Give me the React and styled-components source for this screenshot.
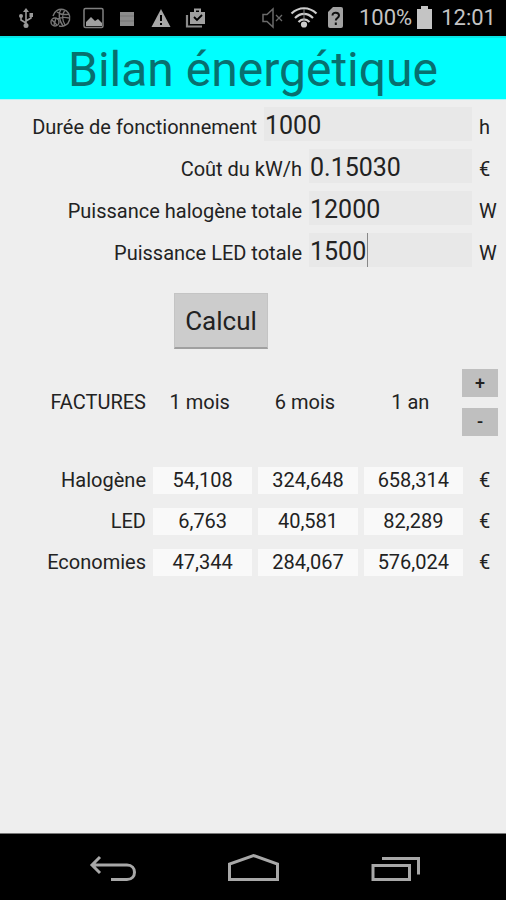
import React, { Component } from "react";
import styled, { createGlobalStyle } from "styled-components";

const GlobalStyle = createGlobalStyle`
  * { box-sizing: border-box; }
  body {
    margin: 0;
    background: #eeeeee;
    color: #222222;
    font-family: Roboto, "Liberation Sans", sans-serif;
  }
`;

const Screen = styled.div`
  display: flex;
  flex-direction: column;
  min-height: 100vh;
`;

const StatusBar = styled.div`
  display: flex;
  align-items: center;
  justify-content: space-between;
  height: 36px;
  padding: 0 10px 0 14px;
  background: #000000;
  color: #c4c4c4;
  font-size: 22px;
  line-height: 36px;
`;

const IconGroup = styled.div`
  display: flex;
  align-items: center;
  gap: ${props => props.gap}px;
`;

const Icon = styled.svg`
  display: block;
  flex: none;
  fill: none;
`;

const Header = styled.header`
  height: 64px;
  background: #00ffff;
  border-top: 2px solid #08e4e6;
  border-bottom: 1px solid #a8f8f8;
`;

const Title = styled.h1`
  margin: 0;
  color: #08706f;
  font-size: 48px;
  font-weight: 400;
  line-height: 64px;
  text-align: center;
`;

const Main = styled.main`
  flex: 1;
`;

const Form = styled.form`
  display: flex;
  flex-direction: column;
  gap: 8px;
  padding-top: 7px;
`;

const Row = styled.div`
  display: flex;
  align-items: center;
  height: 34px;
`;

const Label = styled.label`
  flex: 1;
  padding: 6px 7px 0 0;
  font-size: 20px;
  line-height: 28px;
  text-align: right;
  white-space: nowrap;
`;

const Field = styled.div`
  position: relative;
  width: ${props => (props.$wide ? 208 : 163)}px;
  height: 34px;
`;

const Input = styled.input`
  display: block;
  width: 100%;
  height: 100%;
  padding: 2px 0 0 1px;
  border: 0;
  outline: 0;
  background: #e8e8e8;
  color: #222222;
  font-family: inherit;
  font-size: 25px;
`;

const Caret = styled.span`
  position: absolute;
  top: 0;
  left: 58px;
  width: 1px;
  height: 34px;
  background: #888888;
`;

const Unit = styled.span`
  width: 34px;
  padding: 6px 0 0 7px;
  font-size: 20px;
  line-height: 28px;
`;

const CalcButton = styled.button`
  width: 94px;
  height: 56px;
  margin: 18px 0 0 174px;
  padding: 0;
  border: 1px solid #c4c4c4;
  border-bottom: 2px solid #a0a0a0;
  background: #cccccc;
  color: #222222;
  font-family: inherit;
  font-size: 26px;
`;

const Table = styled.table`
  width: 100%;
  margin-top: 11px;
  table-layout: fixed;
  border-collapse: collapse;
  font-size: 20px;
  line-height: 27px;

  th, td {
    height: 41px;
    padding: 0 3px;
    font-weight: 400;
    text-align: center;
    white-space: nowrap;
  }
  thead th {
    height: 100px;
    padding: 0 9px 16px 3px;
  }
  th:first-child {
    width: 150px;
    padding-right: 4px;
    text-align: right;
  }
  thead th:last-child {
    width: 40px;
    padding: 0 0 16px;
  }
  td:last-child {
    padding-right: 6px;
  }
`;

const Amount = styled.output`
  display: block;
  background: #f9f9f9;
`;

const Stepper = styled.div`
  display: flex;
  flex-direction: column;
  gap: 11px;
  margin-left: -4px;
`;

const StepButton = styled.button`
  width: 36px;
  height: 28px;
  padding: 0;
  border: 0;
  background: #bfbfbf;
  color: #222222;
  font-family: inherit;
  font-size: 18px;
  font-weight: 500;
`;

const NavBar = styled.nav`
  display: flex;
  justify-content: center;
  align-items: center;
  gap: 86px;
  height: 67px;
  border-top: 1px solid #777777;
  background: #000000;
`;

const NavButton = styled.button`
  padding: 0;
  border: 0;
  background: none;
`;

const inputs = [
  { id: "duree", label: "Durée de fonctionnement", value: "1000", unit: "h", wide: true },
  { id: "cout", label: "Coût du kW/h", value: "0.15030", unit: "€" },
  { id: "halogene", label: "Puissance halogène totale", value: "12000", unit: "W" },
  { id: "led", label: "Puissance LED totale", value: "1500", unit: "W", active: true }
];

const periods = ["1 mois", "6 mois", "1 an"];

const bills = [
  { name: "Halogène", amounts: ["54,108", "324,648", "658,314"] },
  { name: "LED", amounts: ["6,763", "40,581", "82,289"] },
  { name: "Economies", amounts: ["47,344", "284,067", "576,024"] }
];

const Notifications = () => (
  <IconGroup gap={10}>
    <Icon width="24" height="24" viewBox="0 0 24 24">
      <path d="M12 4v16M12 17l-5-3v-4M12 15l5-3V9" stroke="#989898" strokeWidth="1.6" />
      <path d="M12 2l3 4H9z" fill="#989898" />
      <circle cx="7" cy="10" r="2" fill="#989898" />
      <path d="M15.500 7h3.500v4h-3.500z" fill="#989898" />
      <circle cx="12" cy="19.500" r="2.500" fill="#989898" />
    </Icon>
    <Icon width="24" height="24" viewBox="0 0 24 24" stroke="#757575" strokeWidth="1.4">
      <path d="M5 10a8.500 8.500 0 1 1 6 10M13 3c-3 5-2 11 2 17M17 4c-3 4-3 10 0 15M9 6c4 3 8 3 12 2M9 13c4-2 8-2 12-1" />
      <circle cx="7" cy="16" r="4" />
      <path d="M4 14l5 5M8 12l-2 7" />
    </Icon>
    <Icon width="24" height="24" viewBox="0 0 24 24">
      <rect x="2" y="2.500" width="19" height="19" rx="1.500" stroke="#808080" strokeWidth="1.5" />
      <path d="M4 20v-4l5-5 4 4 3-2 4 4v3z" fill="#a0a0a0" />
    </Icon>
    <Icon width="24" height="24" viewBox="0 0 24 24">
      <path d="M4 6h14v14H4z" fill="#8c8c8c" />
      <path d="M4 10h14M4 15h14" stroke="#777777" />
    </Icon>
    <Icon width="24" height="24" viewBox="0 0 24 24">
      <path d="M11 3l9.500 18h-19z" fill="#a6a6a6" />
      <path d="M11 9v6M11 17v2" stroke="#000000" strokeWidth="2" />
    </Icon>
    <Icon width="24" height="24" viewBox="0 0 24 24">
      <path d="M6 6h15v12H6z" fill="#a0a0a0" />
      <path d="M11 6V3.500h5V6" stroke="#a0a0a0" strokeWidth="2" />
      <path d="M10 11l3 3 5-5" stroke="#000000" strokeWidth="1.8" />
      <path d="M3 9v11.500h15" stroke="#8a8a8a" strokeWidth="2.200" />
    </Icon>
  </IconGroup>
);

const PhoneState = () => (
  <IconGroup gap={9}>
    <IconGroup gap={4}>
      <Icon width="28" height="24" viewBox="0 0 28 24">
        <path d="M5 8.500h4l6-5.500v18l-6-5.500H5z" stroke="#6a6a6a" strokeWidth="1.5" />
        <path d="M18 9l6 6M24 9l-6 6" stroke="#6a6a6a" strokeWidth="1.300" />
      </Icon>
      <Icon width="28" height="24" viewBox="0 0 28 24" stroke="#cccccc" strokeWidth="2.200">
        <path d="M1.500 7.500C9 .5 19 .5 26.500 7.500M5 12c5.500-5.500 12.500-5.500 18 0M8.500 16c3.500-3.500 7.500-3.500 11 0" />
        <circle cx="14" cy="18.500" r="2" fill="#cccccc" />
        <path d="M14 3v12" strokeWidth="1" stroke="#888888" />
      </Icon>
      <Icon width="28" height="24" viewBox="0 0 28 24">
        <path d="M11 1h8q2 0 2 2v17q0 2-2 2H8q-2 0-2-2V6z" fill="#a2a2a2" />
        <path d="M10.500 9.500c0-4 6.500-3.500 6.500 0 0 2.500-3.200 2.500-3.200 5M13.800 16.500v2.500" stroke="#111111" strokeWidth="2" />
      </Icon>
    </IconGroup>
    <IconGroup gap={5}>
      <span>100%</span>
      <Icon width="15" height="24" viewBox="0 0 15 24">
        <path d="M4 0h7v3h4v20H0V3h4z" fill="#c4c4c4" />
      </Icon>
    </IconGroup>
    <span>12:01</span>
  </IconGroup>
);

class App extends Component {
  render() {
    return (
      <Screen>
        <GlobalStyle />
        <StatusBar>
          <Notifications />
          <PhoneState />
        </StatusBar>
        <Header>
          <Title>Bilan énergétique</Title>
        </Header>
        <Main>
          <Form onSubmit={e => e.preventDefault()}>
            {inputs.map(item => (
              <Row key={item.id}>
                <Label htmlFor={item.id}>{item.label}</Label>
                <Field $wide={item.wide}>
                  <Input id={item.id} type="text" inputMode="decimal" defaultValue={item.value} />
                  {item.active && <Caret />}
                </Field>
                <Unit>{item.unit}</Unit>
              </Row>
            ))}
            <CalcButton type="submit">Calcul</CalcButton>
          </Form>
          <Table>
            <thead>
              <tr>
                <th>FACTURES</th>
                {periods.map(period => (
                  <th key={period}>{period}</th>
                ))}
                <th>
                  <Stepper>
                    <StepButton type="button">+</StepButton>
                    <StepButton type="button">-</StepButton>
                  </Stepper>
                </th>
              </tr>
            </thead>
            <tbody>
              {bills.map(bill => (
                <tr key={bill.name}>
                  <th scope="row">{bill.name}</th>
                  {bill.amounts.map(amount => (
                    <td key={amount}>
                      <Amount>{amount}</Amount>
                    </td>
                  ))}
                  <td>€</td>
                </tr>
              ))}
            </tbody>
          </Table>
        </Main>
        <NavBar>
          <NavButton type="button" aria-label="Retour">
            <Icon width="54" height="36" viewBox="0 0 54 36" stroke="#a8a8a8" strokeWidth="3">
              <path d="M6 16h35c10 0 10 14.500 0 14.500H25M14 8l-8 8 8 8" />
            </Icon>
          </NavButton>
          <NavButton type="button" aria-label="Accueil">
            <Icon width="54" height="36" viewBox="0 0 54 36" stroke="#a8a8a8" strokeWidth="3">
              <path d="M3.500 30.500V15L27.500 6.500 51.500 15v15.500z" />
            </Icon>
          </NavButton>
          <NavButton type="button" aria-label="Applications">
            <Icon width="54" height="36" viewBox="0 0 54 36" stroke="#a8a8a8" strokeWidth="3">
              <path d="M7 16.500h36.500v14H7zM16 9.500h36.500v16" />
            </Icon>
          </NavButton>
        </NavBar>
      </Screen>
    );
  }
}

export default App;
